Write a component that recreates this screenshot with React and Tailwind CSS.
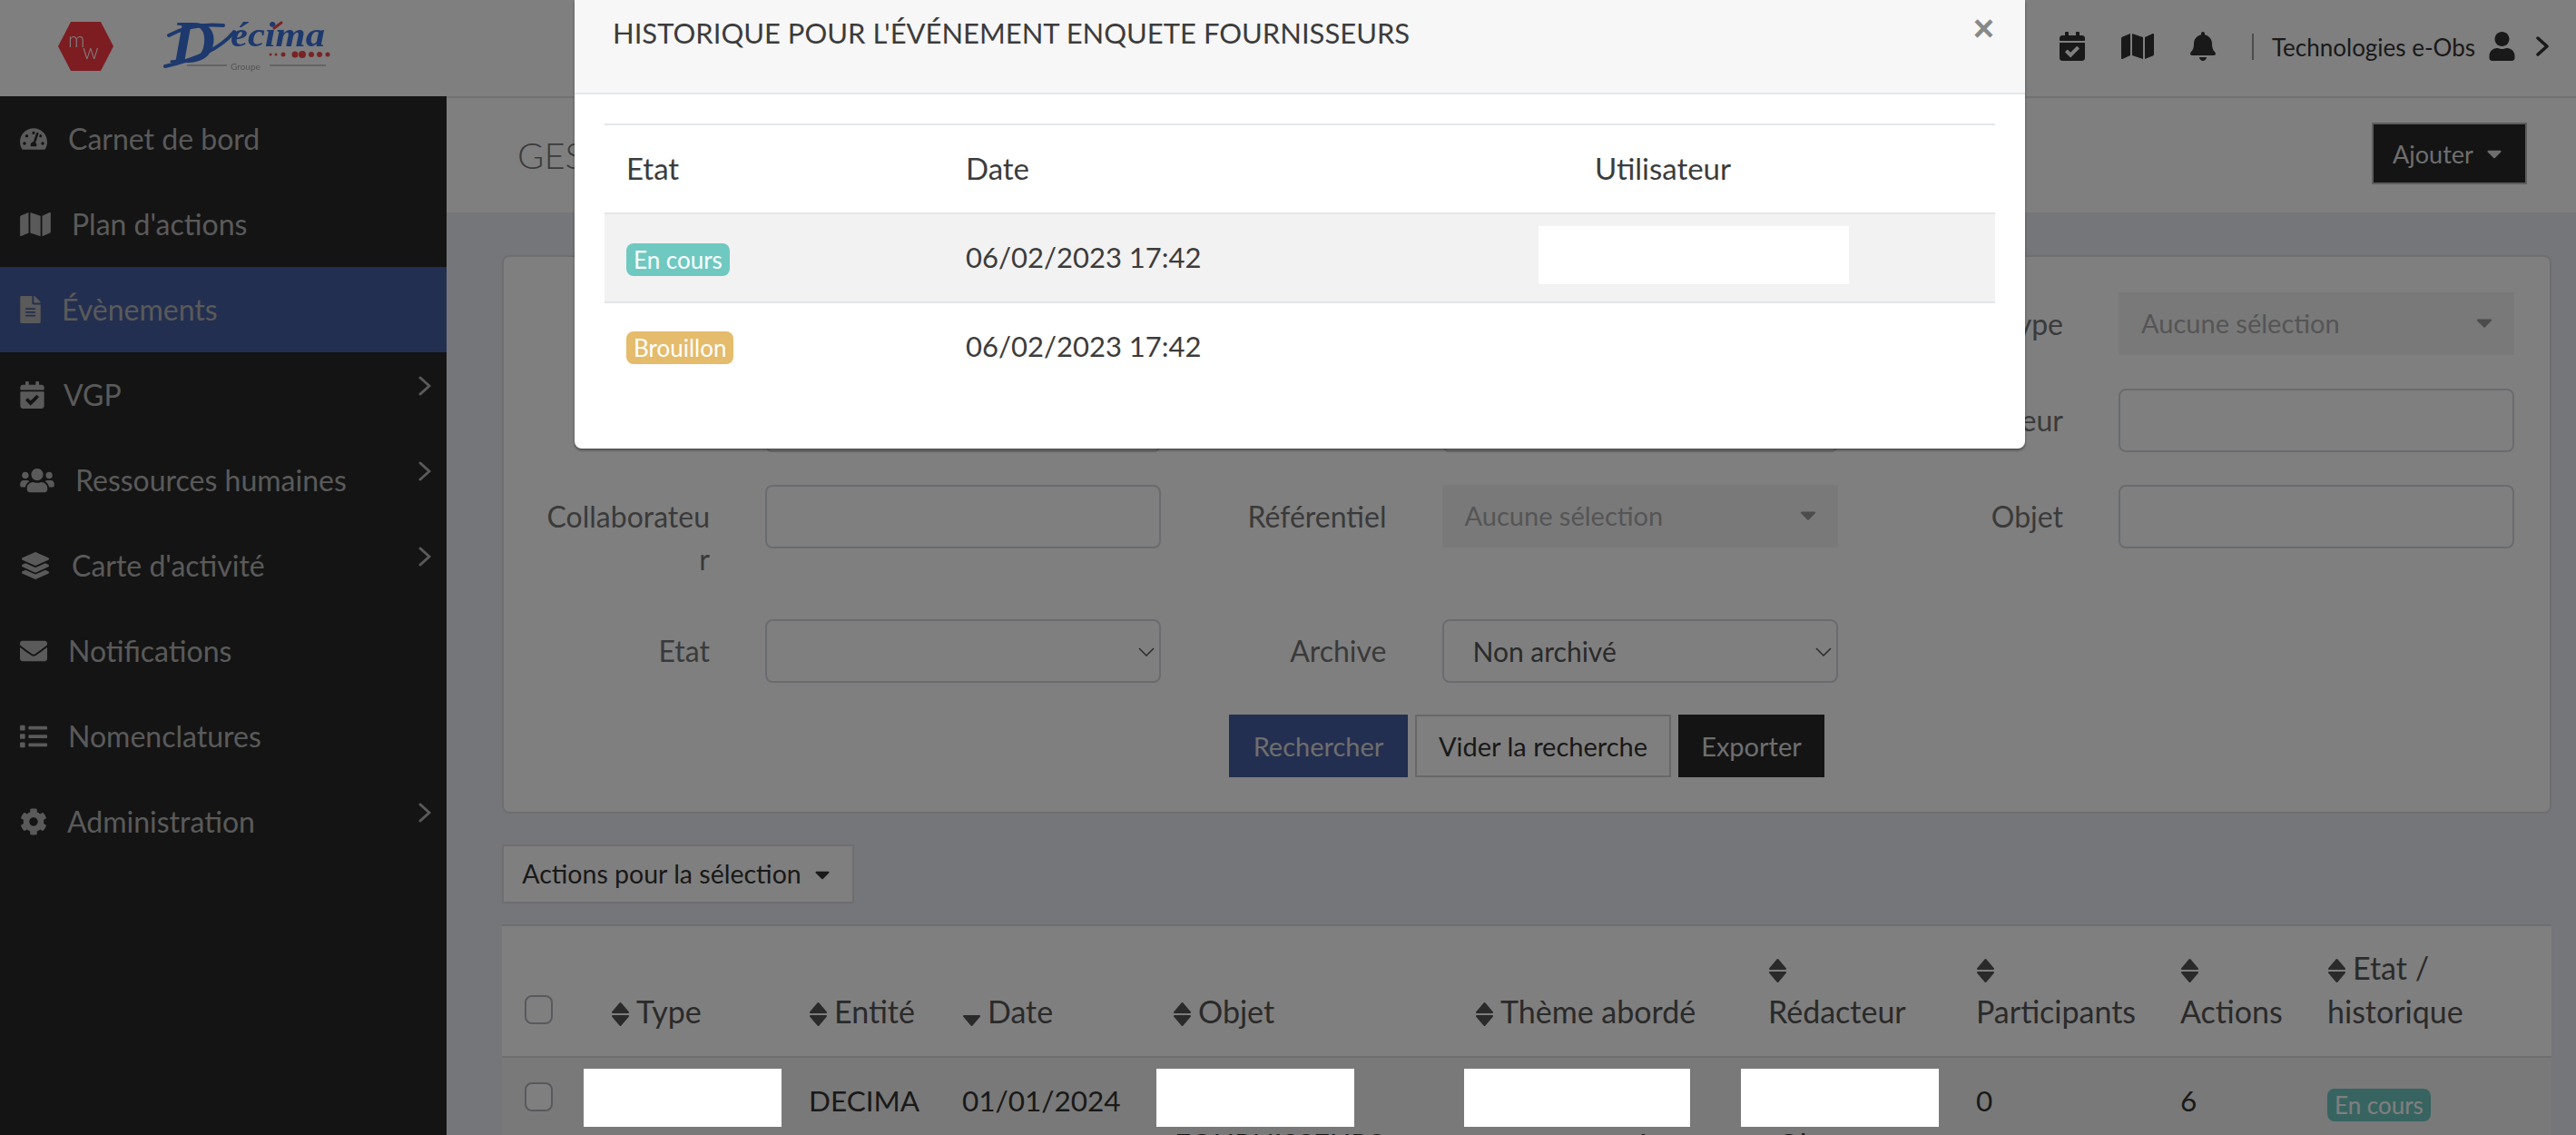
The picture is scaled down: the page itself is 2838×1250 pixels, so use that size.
import React from 'react';
import {
  FaTachometerAlt, FaMap, FaFileAlt, FaCalendarCheck, FaUsers, FaLayerGroup, FaEnvelope, FaList, FaCog,
  FaBell, FaUser, FaCaretDown,
} from 'react-icons/fa';

const menu = [
  { label: 'Carnet de bord', Icon: FaTachometerAlt, iconClass: 'w-[30px] h-[30px]', gap: 'ml-[23px]' },
  { label: "Plan d'actions", Icon: FaMap, iconClass: 'w-[34px] h-[30px]', gap: 'ml-[23px]' },
  { label: 'Évènements', Icon: FaFileAlt, iconClass: 'w-[23px] h-[30px]', gap: 'ml-[23px]', active: true },
  { label: 'VGP', Icon: FaCalendarCheck, iconClass: 'w-[27px] h-[30px]', gap: 'ml-[21px]', arrow: true },
  { label: 'Ressources humaines', Icon: FaUsers, iconClass: 'w-[38px] h-[30px]', gap: 'ml-[23px]', arrow: true },
  { label: "Carte d'activité", Icon: FaLayerGroup, iconClass: 'w-[30px] h-[30px] ml-[2px]', gap: 'ml-[25px]', arrow: true },
  { label: 'Notifications', Icon: FaEnvelope, iconClass: 'w-[30px] h-[30px]', gap: 'ml-[23px]' },
  { label: 'Nomenclatures', Icon: FaList, iconClass: 'w-[30px] h-[30px]', gap: 'ml-[23px]' },
  { label: 'Administration', Icon: FaCog, iconClass: 'w-[30px] h-[30px]', gap: 'ml-[22px]', arrow: true },
];

const Logos = () => (
  <div className="flex items-center gap-[55px] pl-[64px] blur-[0.5px]">
    <svg width="61" height="54" viewBox="0 0 61 54">
      <polygon points="14,0 47,0 61,27 47,54 14,54 0,27" fill="#fa3a44" />
      <text x="11" y="28" fontSize="23" fontWeight="300" fill="#fff" fontFamily="Lato, sans-serif">m</text>
      <text x="27" y="41" fontSize="23" fontWeight="300" fill="#fff" fontFamily="Lato, sans-serif">w</text>
    </svg>
    <svg width="184" height="56" viewBox="0 0 184 56">
      <path d="M2 50 C30 44 60 34 78 12" fill="none" stroke="#3a72dc" strokeWidth="4" strokeLinecap="round" />
      <path d="M6 16 C24 6 44 3 66 5" fill="none" stroke="#3a72dc" strokeWidth="4" strokeLinecap="round" />
      <text x="8" y="46" fontSize="68" fontStyle="italic" fontWeight="700" fill="#3a72dc" fontFamily="'Liberation Serif', serif">D</text>
      <text x="74" y="28" fontSize="37" textLength="104" lengthAdjust="spacingAndGlyphs" fontStyle="italic" fontWeight="700" fill="#3a72dc" fontFamily="'Liberation Serif', serif">écima</text>
      <path d="M122 8 L130 2" stroke="#f04848" strokeWidth="3" strokeLinecap="round" />
      <circle cx="118" cy="37" r="1.5" fill="#f04848" />
      <circle cx="124" cy="37" r="1.5" fill="#f04848" />
      <circle cx="132" cy="37" r="2.5" fill="#f04848" />
      <circle cx="145" cy="37" r="3.5" fill="#f04848" />
      <circle cx="153" cy="37" r="4" fill="#f04848" />
      <circle cx="163" cy="37" r="3" fill="#f04848" />
      <circle cx="172" cy="37" r="3" fill="#f04848" />
      <circle cx="181" cy="37" r="2.5" fill="#f04848" />
      <rect x="26" y="48" width="44" height="2" fill="#c8c8c8" />
      <text x="74" y="54" fontSize="10" fill="#aaa" fontFamily="Lato, sans-serif">Groupe</text>
      <rect x="117" y="48" width="62" height="2" fill="#c8c8c8" />
    </svg>
  </div>
);

const Chevron = ({ className, width = 3 }) => (
  <svg viewBox="0 0 14 22" className={className} fill="none" stroke="currentColor" strokeWidth={width} strokeLinecap="round" strokeLinejoin="round">
    <polyline points="2,2 12,11 2,20" />
  </svg>
);

const SortIcon = ({ down }) => (
  <svg viewBox="0 0 21 28" className="mr-[7px] inline h-[28px] w-[21px] align-[-4px]" fill="currentColor" stroke="currentColor" strokeWidth="2" strokeLinejoin="round">
    {!down && <polygon points="10.5,2 19,12 2,12" />}
    <polygon points="2,16 19,16 10.5,26" />
  </svg>
);

const Field = ({ label, children }) => (
  <div className="flex">
    <label className="w-[227px] shrink-0 pb-[7px] pt-[11px] text-right text-[#757575]">{label}</label>
    <div className="ml-[61px] w-[436px]">{children}</div>
  </div>
);

const TextInput = () => (
  <input className="block h-[70px] w-full rounded-lg border-2 border-[#d5d7e0] bg-white" />
);

const NativeSelect = ({ children }) => (
  <div className="relative">
    <select className="block h-[70px] w-full appearance-none rounded-lg border-2 border-[#d5d7e0] bg-white px-[32px] text-[30px] text-[#555]">
      {children}
    </select>
    <svg viewBox="0 0 18 10" className="absolute right-[7px] top-[31px] h-[10px] w-[18px] text-[#555]" fill="none" stroke="currentColor" strokeWidth="1.5">
      <polyline points="1,1 9,9 17,1" />
    </svg>
  </div>
);

const DisabledSelect = () => (
  <div className="flex h-[69px] w-full items-center justify-between bg-[#f3f3f3] pb-[3px] pl-[25px] pr-[20px] text-[29px] text-[#aaa]">
    <span>Aucune sélection</span>
    <FaCaretDown className="h-[28px] w-[26px] text-[#999]" />
  </div>
);

const Th = ({ children, width, down }) => (
  <th className={`${width} px-6 pb-[25px] align-bottom text-[34px] font-normal leading-[48px] text-[#555]`}>
    <SortIcon down={down} />
    {children}
  </th>
);

const Redacted = ({ className }) => (
  <div className={`relative z-50 h-[64px] bg-white ${className}`} />
);

const Badge = ({ className, children }) => (
  <span className={`inline-block rounded-lg px-2 text-[26px] leading-[36px] text-white ${className}`}>{children}</span>
);

const App = () => {
  return (
    <div className="relative h-[1250px] overflow-hidden bg-[#eaecf4] text-[32px] leading-[47px] text-[#333]" style={{ fontFamily: 'Lato, sans-serif' }}>
      {/* Top bar */}
      <header className="flex h-[106px] items-center justify-between bg-white pb-1 pr-[30px]">
        <Logos />
        <div className="flex items-center text-[#333]">
          <FaCalendarCheck className="h-[32px] w-[28px]" />
          <FaMap className="ml-[40px] h-[32px] w-[36px]" />
          <FaBell className="ml-[40px] h-[32px] w-[28px]" />
          <div className="ml-[40px] h-[29px] w-[2px] bg-[#999]" />
          <span className="ml-[20px] pt-[2px] text-[26px]">Technologies e-Obs</span>
          <FaUser className="ml-[15px] h-[32px] w-[29px]" />
          <Chevron className="ml-[23px] h-[24px] w-[14px]" width={3.5} />
        </div>
      </header>

      <div className="flex">
        {/* Sidebar */}
        <aside className="h-[1144px] w-[492px] shrink-0 bg-[#282828] text-[#b4b4b4]">
          {menu.map(({ label, Icon, iconClass, gap, active, arrow }) => (
            <div key={label} className={`flex h-[94px] items-center pl-[22px] pr-[17px] ${active ? 'bg-[#465ea0]' : ''}`}>
              <Icon className={`shrink-0 ${iconClass}`} />
              <span className={`${gap} flex-1 pb-[2px]`}>{label}</span>
              {arrow && <Chevron className="-mt-[20px] h-[22px] w-[14px]" />}
            </div>
          ))}
        </aside>

        {/* Main */}
        <main className="min-w-0 flex-1">
          <div className="flex h-[128px] items-center justify-between border-t-2 border-[#e3e3e3] bg-white pl-[78px] pr-[54px] pt-[1px]">
            <h1 className="text-[40px] font-light text-[#777]">GESTION DES ÉVÉNEMENTS</h1>
            <button className="mt-[26px] flex h-[68px] w-[171px] items-center justify-center gap-[10px] self-start border-2 border-[#bbb] bg-[#282828] text-[27px] text-[#ddd]">
              Ajouter
              <FaCaretDown className="h-[26px] w-[26px]" />
            </button>
          </div>

          <div className="pl-[61px] pr-[27px] pt-[47px]">
            {/* Search form */}
            <section className="rounded-lg border-2 border-[#dcdde3] bg-white pb-[38px] pt-[39px]">
              <div className="grid grid-cols-[repeat(3,724px)] gap-x-[21.5px] gap-y-[36px]">
                <Field label="Entité"><TextInput /></Field>
                <Field label="Thème"><TextInput /></Field>
                <Field label="Type"><DisabledSelect /></Field>
                <Field label="Nom"><TextInput /></Field>
                <Field label="Date"><TextInput /></Field>
                <Field label="Rédacteur"><TextInput /></Field>
                <Field label={<>Collaborateu<br />r</>}><TextInput /></Field>
                <Field label="Référentiel"><DisabledSelect /></Field>
                <Field label="Objet"><TextInput /></Field>
                <Field label="Etat">
                  <NativeSelect><option></option></NativeSelect>
                </Field>
                <Field label="Archive">
                  <NativeSelect><option>Non archivé</option></NativeSelect>
                </Field>
              </div>
              <div className="mt-[35px] flex justify-center gap-2 text-[29px]">
                <button className="h-[69px] w-[197px] bg-[#465ea0] text-[#ddd]">Rechercher</button>
                <button className="h-[69px] w-[282px] border-2 border-[#d0d0d0] bg-white text-[#333]">Vider la recherche</button>
                <button className="h-[69px] w-[161px] bg-[#282828] text-[#ddd]">Exporter</button>
              </div>
            </section>

            <button className="mt-[34px] flex h-[65px] w-[388px] items-center justify-center gap-[10px] border-2 border-[#dcdde3] bg-white text-[28.5px] text-[#333]">
              Actions pour la sélection
              <FaCaretDown className="h-[26px] w-[26px]" />
            </button>

            {/* Events table */}
            <section className="mt-[23px] border-t-2 border-[#dcdde3] bg-white">
              <table className="w-full table-fixed text-left">
                <thead>
                  <tr className="h-[144px] border-b-2 border-[#dcdde3]">
                    <th className="w-[96px] pb-[35px] pl-[25px] align-bottom">
                      <input type="checkbox" className="block h-[32px] w-[31px] appearance-none rounded-lg border-2 border-[#b0b2bc] bg-white" />
                    </th>
                    <Th width="w-[218px]">Type</Th>
                    <Th width="w-[169px]">Entité</Th>
                    <Th width="w-[232px]" down>Date</Th>
                    <Th width="w-[333px]">Objet</Th>
                    <Th width="w-[323px]">Thème abordé</Th>
                    <Th width="w-[229px]"><br />Rédacteur</Th>
                    <Th width="w-[225px]"><br />Participants</Th>
                    <Th width="w-[162px]"><br />Actions</Th>
                    <Th width="w-auto">Etat /<br />historique</Th>
                  </tr>
                </thead>
                <tbody className="text-[31.5px]">
                  <tr className="bg-[#f2f2f2] align-top">
                    <td className="pl-[25px] pt-[27px]">
                      <input type="checkbox" className="block h-[32px] w-[31px] appearance-none rounded-lg border-2 border-[#b0b2bc] bg-white" />
                    </td>
                    <td className="px-6 pt-3"><Redacted className="-ml-[30px] w-[218px]" /></td>
                    <td className="px-6 pt-6">DECIMA</td>
                    <td className="px-6 pt-6">01/01/2024</td>
                    <td className="px-6 pt-3">
                      <Redacted className="-ml-[18px] w-[218px]" />
                      <div className="-mt-[5px] whitespace-nowrap pl-[2px]">FOURNISSEURS</div>
                    </td>
                    <td className="px-6 pt-3">
                      <Redacted className="-ml-[12px] w-[249px]" />
                      <div className="-mt-[5px] whitespace-nowrap pl-[174px]">é</div>
                    </td>
                    <td className="px-6 pt-3">
                      <Redacted className="-ml-[30px] w-[218px]" />
                      <div className="-mt-[5px] whitespace-nowrap pl-[10px]">Oh</div>
                    </td>
                    <td className="px-6 pt-6">0</td>
                    <td className="px-6 pt-6">6</td>
                    <td className="px-6 pt-[27px]"><Badge className="bg-[#6fc9c1]">En cours</Badge></td>
                  </tr>
                </tbody>
              </table>
            </section>
          </div>
        </main>
      </div>

      {/* Modal */}
      <div className="absolute inset-0 z-40 bg-black/50" />
      <div className="absolute left-[633px] top-0 z-50 h-[494px] w-[1598px] rounded-b-lg bg-white text-[#3c3c3c] shadow-[0_2px_3px_rgba(0,0,0,0.4)]">
        <div className="flex h-[104px] items-start justify-between border-b-2 border-[#e3e6ea] bg-[#f7f7f7] pl-[42px] pr-[34px]">
          <h2 className="pt-[15px] text-[31px] leading-[42px]">HISTORIQUE POUR L'ÉVÉNEMENT ENQUETE FOURNISSEURS</h2>
          <span className="pt-[11px] text-[40px] font-bold leading-[40px] text-[#888]" style={{ fontFamily: 'Liberation Sans, sans-serif' }}>×</span>
        </div>
        <div className="px-[33px] pt-[32px]">
          <table className="w-full table-fixed border-t-2 border-[#e3e6ea] text-left">
            <thead>
              <tr className="h-[98px] border-b-2 border-[#e3e6ea] text-[33px]">
                <th className="w-[397px] pb-[2px] pl-6 font-normal">Etat</th>
                <th className="w-[694px] pb-[2px] pl-[1px] font-normal">Date</th>
                <th className="pb-[2px] pl-0 font-normal">Utilisateur</th>
              </tr>
            </thead>
            <tbody className="text-[31px]">
              <tr className="h-[98px] border-b-2 border-[#e3e6ea] bg-[#f2f2f2]">
                <td className="pl-6"><Badge className="bg-[#6fc9c1]">En cours</Badge></td>
                <td className="pb-[2px] pl-[1px]">06/02/2023 17:42</td>
                <td><div className="-ml-[62px] -mt-[6px] h-[64px] w-[342px] bg-white" /></td>
              </tr>
              <tr className="h-[96px]">
                <td className="pl-6"><Badge className="bg-[#e5bb6c]">Brouillon</Badge></td>
                <td className="pl-[1px]">06/02/2023 17:42</td>
                <td></td>
              </tr>
            </tbody>
          </table>
        </div>
      </div>
    </div>
  );
};

export default App;
